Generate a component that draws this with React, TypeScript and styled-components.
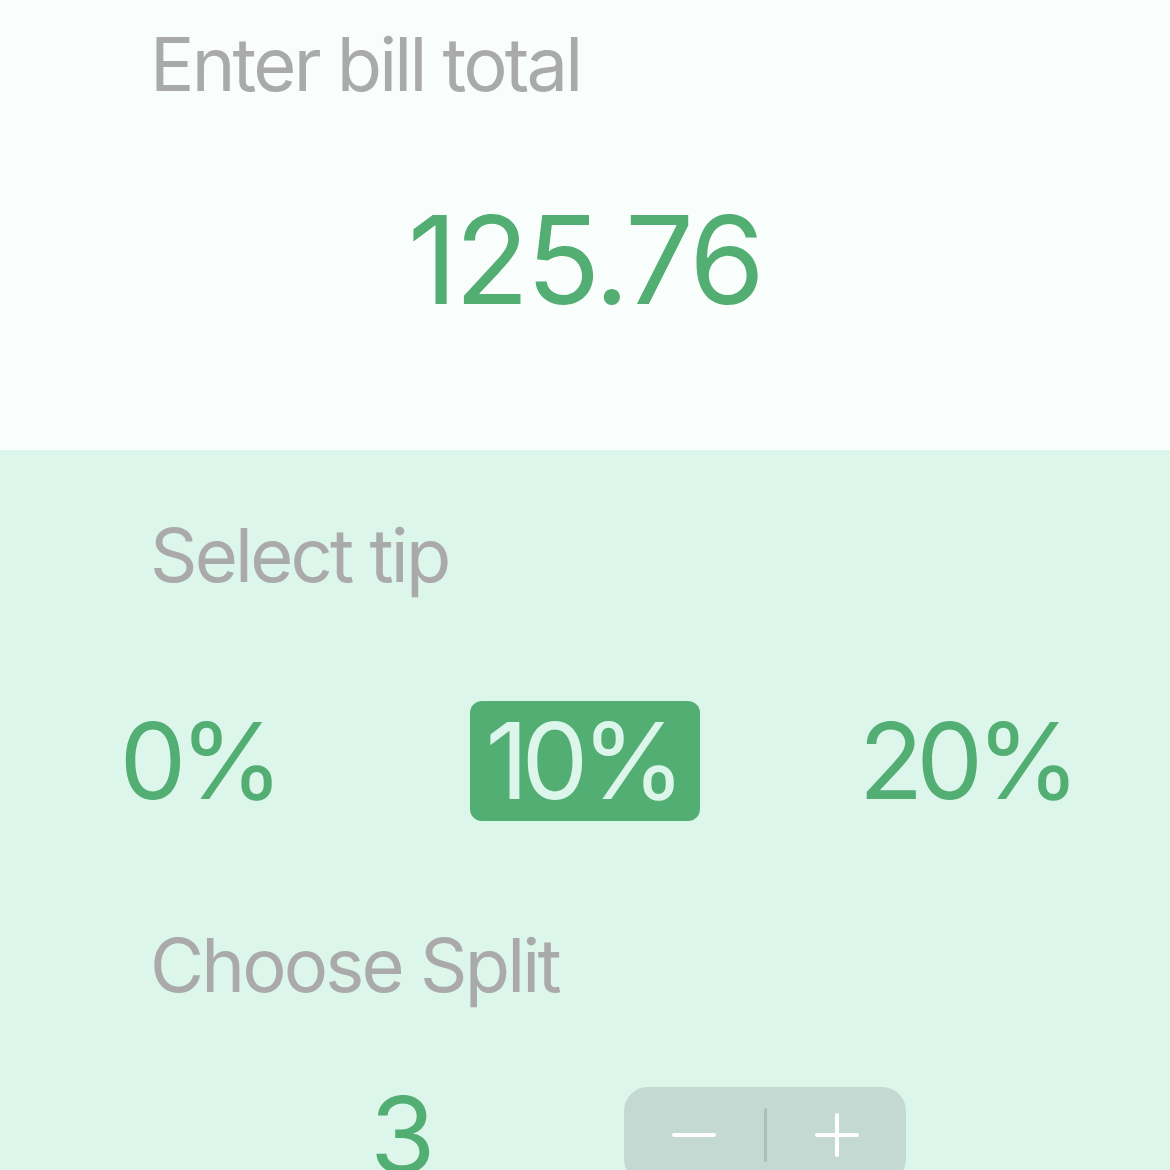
import React, { useState } from "react";
import styled, { createGlobalStyle } from "styled-components";

const Global = createGlobalStyle`
  html, body { margin: 0; padding: 0; background: #ddf6eb; }
  body { font-family: Inter, "Noto Sans", "Liberation Sans", sans-serif; overflow: hidden; }
  * { box-sizing: border-box; }
`;

const Page = styled.div`
  width: 1170px;
  height: 1170px;
  display: flex;
  flex-direction: column;
  overflow: hidden;
`;

const TopSection = styled.section`
  height: 450px;
  flex: none;
  background: #f9fefc;
  padding-top: 27px;
  display: flex;
  flex-direction: column;
`;

const BottomSection = styled.section`
  flex: 1;
  background: #ddf6eb;
  padding-top: 68px;
  display: flex;
  flex-direction: column;
`;

const Label = styled.div<{ $mt?: number }>`
  font-size: 74px;
  line-height: 74px;
  height: 74px;
  color: #aaaaaa;
  padding-left: 150px;
  letter-spacing: -2.8px;
  margin-top: ${(p) => p.$mt ?? 0}px;
  white-space: nowrap;
`;

const Amount = styled.div`
  margin-top: 98px;
  font-size: 122px;
  line-height: 122px;
  color: #52ae72;
  text-align: center;
  letter-spacing: -2.8px;
`;

const TipRow = styled.div`
  margin-top: 109px;
  display: grid;
  grid-template-columns: repeat(3, 384px);
  justify-items: center;
  padding-left: 9px;
`;

const TipButton = styled.button<{ $selected?: boolean }>`
  border: none;
  font-family: inherit;
  font-size: 106px;
  line-height: 106px;
  letter-spacing: -7px;
  padding: 7px 21px 7px 15px;
  border-radius: 12px;
  cursor: pointer;
  background: ${(p) => (p.$selected ? "#52ae72" : "transparent")};
  color: ${(p) => (p.$selected ? "#ddf6eb" : "#52ae72")};
`;

const SplitRow = styled.div`
  margin-top: 80px;
  display: flex;
  align-items: center;
  padding-left: 370px;
  gap: 190px;
`;

const SplitCount = styled.div`
  font-size: 106px;
  line-height: 106px;
  color: #52ae72;
`;

const Stepper = styled.div`
  width: 282px;
  height: 96px;
  border-radius: 24px;
  background: #c3d9d2;
  display: flex;
  align-items: center;
  margin-left: -1px;
`;

const StepButton = styled.button`
  flex: 1;
  height: 100%;
  border: none;
  background: transparent;
  display: flex;
  align-items: center;
  justify-content: center;
  padding: 0;
  cursor: pointer;
`;

const StepDivider = styled.div`
  width: 3px;
  height: 54px;
  border-radius: 2px;
  background: #a9bfb8;
  flex: none;
`;

const MinusIcon = () => (
  <svg width="46" height="46" viewBox="0 0 46 46">
    <line x1="3" y1="23" x2="43" y2="23" stroke="#ffffff" strokeWidth="4" strokeLinecap="round" />
  </svg>
);

const PlusIcon = () => (
  <svg width="46" height="46" viewBox="0 0 46 46">
    <line x1="3" y1="23" x2="43" y2="23" stroke="#ffffff" strokeWidth="4" strokeLinecap="round" />
    <line x1="23" y1="3" x2="23" y2="43" stroke="#ffffff" strokeWidth="4" strokeLinecap="round" />
  </svg>
);

const tips = [0, 10, 20];

export default function App() {
  const [tip, setTip] = useState(10);
  const [split, setSplit] = useState(3);
  return (
    <Page>
      <Global />
      <TopSection>
        <Label>Enter bill total</Label>
        <Amount>125.76</Amount>
      </TopSection>
      <BottomSection>
        <Label>Select tip</Label>
        <TipRow>
          {tips.map((t) => (
            <TipButton key={t} $selected={t === tip} onClick={() => setTip(t)}>
              {t}%
            </TipButton>
          ))}
        </TipRow>
        <Label $mt={107}>Choose Split</Label>
        <SplitRow>
          <SplitCount>{split}</SplitCount>
          <Stepper>
            <StepButton onClick={() => setSplit(Math.max(1, split - 1))}>
              <MinusIcon />
            </StepButton>
            <StepDivider />
            <StepButton onClick={() => setSplit(split + 1)}>
              <PlusIcon />
            </StepButton>
          </Stepper>
        </SplitRow>
      </BottomSection>
    </Page>
  );
}
